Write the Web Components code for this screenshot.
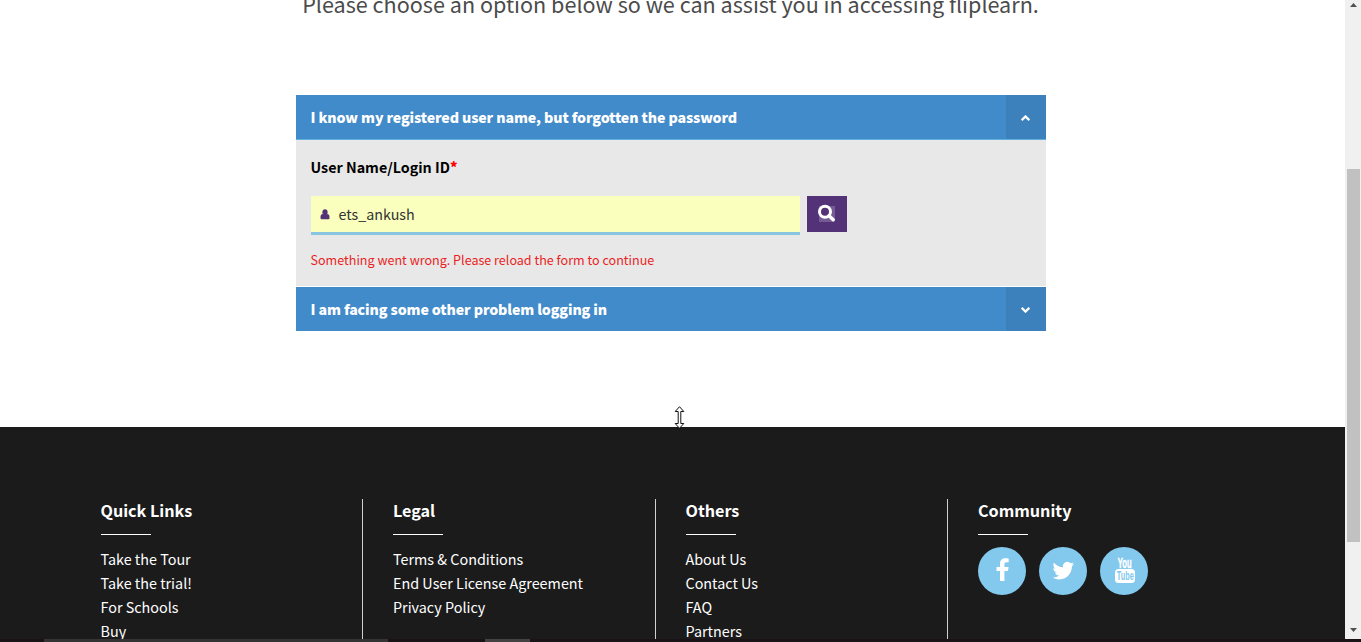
<!DOCTYPE html>
<html lang="en">
<head>
<meta charset="utf-8">
<title>Fliplearn - Login help</title>
<style>
html,body{margin:0;height:100%;overflow:hidden;background:#fff}
body{font-family:"Noto Sans CJK SC","Noto Sans",sans-serif}
</style>
</head>
<body>
<help-page>
  <page-intro slot="main">Please choose an option below so we can assist you in accessing fliplearn.</page-intro>
  <help-accordion slot="main">
    <accordion-item open label="I know my registered user name, but forgotten the password">
      <login-form value="ets_ankush" error="Something went wrong. Please reload the form to continue">User Name/Login ID</login-form>
    </accordion-item>
    <accordion-item label="I am facing some other problem logging in"></accordion-item>
  </help-accordion>
  <page-footer slot="main">
    <footer-column heading="Quick Links"><footer-link>Take the Tour</footer-link><footer-link>Take the trial!</footer-link><footer-link>For Schools</footer-link><footer-link>Buy</footer-link></footer-column>
    <footer-column heading="Legal"><footer-link>Terms &amp; Conditions</footer-link><footer-link>End User License Agreement</footer-link><footer-link>Privacy Policy</footer-link></footer-column>
    <footer-column heading="Others"><footer-link>About Us</footer-link><footer-link>Contact Us</footer-link><footer-link>FAQ</footer-link><footer-link>Partners</footer-link></footer-column>
    <footer-column heading="Community" last><social-links></social-links></footer-column>
  </page-footer>
  <scroll-bar slot="scroll"></scroll-bar>
  <task-strip slot="bottom"></task-strip>
</help-page>
<resize-cursor></resize-cursor>
<script>
function define(name, render) {
  customElements.define(name, class extends HTMLElement {
    connectedCallback() {
      if (this.shadowRoot) return;
      this.attachShadow({ mode: 'open' }).innerHTML = render(this);
    }
  });
}

define('help-page', () => `
<style>
:host{display:grid;grid-template-columns:minmax(0,1fr) 16px;grid-template-rows:639px 3px;height:642px;overflow:hidden}
main{overflow:hidden;display:flex;flex-direction:column}
</style>
<main><slot name="main"></slot></main><slot name="scroll"></slot><slot name="bottom"></slot>`);

define('page-intro', () => `
<style>
:host{display:block;flex:none;height:30px;margin:-11px 0 76px;padding-right:4px;text-align:center;color:#4b4b4b;font-size:21.58px;line-height:30px;white-space:nowrap}
</style>
<slot></slot>`);

define('help-accordion', () => `
<style>:host{display:flex;flex-direction:column;flex:none;gap:1px;width:750px;height:236px;margin:0 0 96px 296px}</style>
<slot></slot>`);

define('accordion-item', el => `
<style>
:host{display:block}
header{display:flex;height:44px;background:#428bca;color:#fff;font-weight:900;font-size:14.2px;letter-spacing:-.12px;line-height:44px;white-space:nowrap}
:host([open]) header{border-bottom:1px solid #5fb0dd}
span{flex:1;padding-left:14.5px}
i{display:flex;width:40px;align-items:center;justify-content:center;background:#3d81bc}
svg{margin-right:2px;margin-top:2px}
:host([open]) svg{transform:scaleY(-1)}
section{background:#e8e8e8;height:146px}
</style>
<header><span>${el.getAttribute('label')}</span><i><svg width="9" height="6" viewBox="0 0 9 6" fill="none" stroke="#fff" stroke-width="2.2"><path d="M.7.8 4.5 4.6 8.3.8"/></svg></i></header>
${el.hasAttribute('open') ? '<section><slot></slot></section>' : ''}`);

define('login-form', el => `
<style>
:host{display:block;padding:15px 0 0 14.5px;color:#000}
label{display:block;height:24px;font-size:14.3px;font-weight:700;line-height:24px}
b{color:#f00}
.row{display:flex;gap:7px;margin-top:17px;height:39px;align-items:flex-start}
.field{box-sizing:border-box;width:489.5px;height:39px;border-bottom:3px solid #87c5e0;background:#faffbd;display:flex;align-items:center;padding-left:9.5px;font-size:14.3px;line-height:36px;color:#333}
.field svg{margin-right:8.5px}
button{border:0;margin:0;padding:0 2px 2px 0;width:40px;height:36px;background:#533278;display:flex;align-items:center;justify-content:center}
p{margin:13px 0 0;color:#ea1f24;font-size:12.57px;line-height:24px}
</style>
<label><slot></slot><b>*</b></label>
<div class="row"><div class="field"><svg width="10" height="11" viewBox="0 0 10 11" fill="#533278"><ellipse cx="5" cy="3.200" rx="2.6" ry="2.900"/><path d="M.5 8.2Q.5 5.100 3 5.100Q5 6.700 7 5.100Q9.500 5.100 9.500 8.200V9Q9.500 10.200 8.300 10.200H1.700Q.5 10.200.5 9Z"/></svg><span>${el.getAttribute('value')}</span></div>
<button aria-label="Search"><svg width="18" height="18" viewBox="0 0 18 18"><path fill="#755b93" d="M2 2h16v16H2z"/><circle cx="8" cy="7.700" r="5.500" fill="#533278" stroke="#fff" stroke-width="3"/><path d="m12 11.700 4.200 4" stroke="#fff" stroke-width="3.400" stroke-linecap="round"/></svg></button></div>
<p>${el.getAttribute('error')}</p>`);

define('page-footer', () => `
<style>:host{display:grid;grid-template-columns:repeat(4,292.5px);flex:1;min-height:0;background:#1b1b1b;color:#fff;padding:72px 0 0 70.5px}</style>
<slot></slot>`);

define('footer-column', el => `
<style>
:host{display:block;box-sizing:border-box;height:140px;padding-left:30px;border-right:1px solid #d0d0d0}
:host([last]){border-right:0}
h3{margin:0;font-size:16.150px;font-weight:700;line-height:22px}
hr{border:0;margin:13px 0 12px;height:1px;width:50px;background:#fff}
</style>
<h3>${el.getAttribute('heading')}</h3><hr><slot></slot>`);

define('footer-link', () => `
<style>:host{display:block;height:24px;line-height:24px;font-size:14.360px;white-space:nowrap}</style><slot></slot>`);

define('social-links', () => `
<style>
:host{display:flex;gap:13px}
a{width:48px;height:48px;border-radius:50%;background:#83c8ed;display:block}
svg{display:block}
text{font-family:"Liberation Sans",sans-serif;font-weight:700}
</style>
<a><svg width="48" height="48" fill="#fff"><path d="M22 34V24h-3.500v-4.100H22v-3C22 13.200 24 11.200 27.300 11.200c1.600 0 2.900.1 3.400.2v3.800h-2.200c-1.700 0-2.100.9-2.100 2.100v2.600h4.200l-.6 4.100h-3.600V34Z"/></svg></a>
<a><svg width="48" height="48" fill="#fff"><path transform="translate(13.500 12.800) scale(.9)" d="M23.950 4.570a10 10 0 0 1-2.820.78 4.960 4.960 0 0 0 2.160-2.730c-.95.560-2 .96-3.120 1.190a4.920 4.920 0 0 0-8.390 4.480C7.690 8.100 4.070 6.130 1.640 3.160a4.820 4.820 0 0 0-.67 2.480c0 1.710.87 3.210 2.190 4.100a4.900 4.900 0 0 1-2.230-.62v.06a4.920 4.920 0 0 0 3.950 4.830 5 5 0 0 1-2.210.08 4.940 4.940 0 0 0 4.600 3.420A9.870 9.870 0 0 1 0 19.540a13.990 13.990 0 0 0 7.550 2.210c9.050 0 14-7.500 14-13.990 0-.21 0-.42-.02-.63a9.940 9.940 0 0 0 2.460-2.550z"/></svg></a>
<a><svg width="48" height="48" fill="#fff"><text transform="translate(17.800 21) scale(.54 1)" font-size="14" stroke="#fff" stroke-width=".5">You</text><rect x="15" y="22" width="20" height="14" rx="3.500"/><text transform="translate(16.800 33.300) scale(.58 1)" font-size="12.600" fill="#83c8ed" style="font-weight:700">Tube</text></svg></a>`);

define('scroll-bar', () => `
<style>
:host{display:flex;flex-direction:column;align-items:center;background:#f0f0f0}
svg{flex:none;display:block}
div{width:13px;height:373px;margin:152px 0 80px;background:#c1c1c1}
</style>
<svg width="16" height="17"><path fill="#505050" d="M5 7h7L8.500 3Z"/></svg><div></div><svg width="16" height="17"><path fill="#505050" d="M5 6h7L8.500 10Z"/></svg>`);

define('task-strip', () => `
<style>
:host{grid-column:1/3;display:flex;background:#1a1216}
i{height:3px;background:#353434}
.a{width:344px;margin-left:44px}.b{width:45px;margin-left:97px;background:#444142}
</style><i class="a"></i><i class="b"></i>`);

define('resize-cursor', () => `
<style>:host{position:absolute;left:674px;top:406px}svg{display:block}</style>
<svg width="11" height="23" viewBox="0 0 11 23"><path d="M5.500.7 9.800 5.500H6.800V17.500H9.800L5.500 22.300 1.200 17.500H4.200V5.500H1.200Z" fill="#fff" stroke="#111" stroke-width="1"/></svg>`);
</script>
</body>
</html>
